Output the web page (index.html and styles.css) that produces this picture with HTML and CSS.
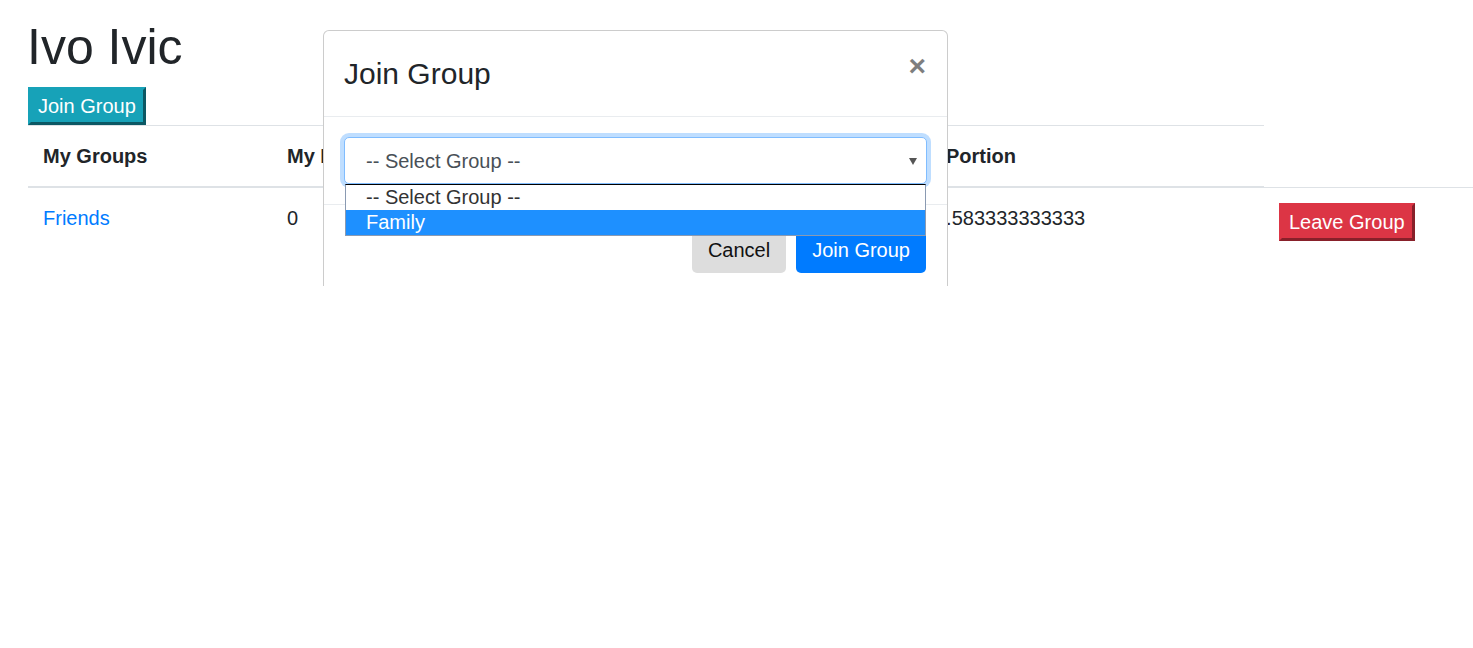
FILE: index.html
```html
<!DOCTYPE html>
<html lang="en">
<head>
<meta charset="utf-8">
<title>Ivo Ivic</title>
<link rel="stylesheet" href="styles.css">
</head>
<body>
<div class="page">
  <h1 class="name">Ivo Ivic</h1>
  <button class="raised raised-info">Join Group</button>
  <table class="groups">
    <colgroup>
      <col class="c1"><col class="c2"><col class="c3"><col class="c4"><col class="c5">
    </colgroup>
    <thead>
      <tr>
        <th>My Groups</th>
        <th>My Points</th>
        <th>Total Points</th>
        <th class="th-portion">Portion</th>
      </tr>
    </thead>
    <tbody>
      <tr>
        <td><a class="link" href="#">Friends</a></td>
        <td>0</td>
        <td>12</td>
        <td>0.583333333333</td>
        <td><button class="raised raised-danger">Leave Group</button></td>
      </tr>
    </tbody>
  </table>
</div>

<div class="modal">
  <div class="modal-dialog">
    <div class="modal-header">
      <h4 class="modal-title">Join Group</h4>
      <button class="close" type="button">&times;</button>
    </div>
    <div class="modal-body">
      <div class="select-wrap">
        <div class="select">
          <span>-- Select Group --</span>
          <span class="arrow"></span>
        </div>
        <div class="dropdown">
          <div class="option">-- Select Group --</div>
          <div class="option active">Family</div>
        </div>
      </div>
    </div>
    <div class="modal-footer">
      <button class="btn btn-light" type="button">Cancel</button>
      <button class="btn btn-primary" type="button">Join Group</button>
    </div>
  </div>
</div>
</body>
</html>
```

FILE: styles.css
```css
html, body {
  margin: 0;
  height: 100%;
  overflow: hidden;
  background: #fff;
}

body {
  position: relative;
  font-family: "Liberation Sans", Arial, sans-serif;
  font-size: 20px;
  line-height: 1.5;
  color: #212529;
}

.page {
  padding: 17px 0 0 28px;
}

.name {
  margin: 0 0 10px -1px;
  font-size: 50px;
  font-weight: 400;
  line-height: 1.2;
}

.raised {
  display: block;
  font-family: inherit;
  font-size: 20px;
  line-height: 30px;
  padding: 1px 7px;
  border: 3px outset;
  border-radius: 0;
  color: #fff;
  cursor: pointer;
}

.raised-info {
  background: #17a2b8;
  border-color: #17a2b8;
}

.raised-danger {
  background: #dc3545;
  border-color: #dc3545;
}

.groups {
  border-collapse: collapse;
  table-layout: fixed;
  width: 1536px;
}

.c1 { width: 244px; }
.c2 { width: 300px; }
.c3 { width: 348px; }
.c4 { width: 344px; }
.c5 { width: 300px; }

.groups th {
  text-align: left;
  font-weight: 700;
  padding: 15px;
  vertical-align: bottom;
  border-top: 1px solid #dee2e6;
  border-bottom: 2px solid #dee2e6;
  white-space: nowrap;
}

.groups th.th-portion {
  padding-left: 26px;
}

.groups td {
  padding: 15px;
  vertical-align: top;
  border-top: 1px solid #dee2e6;
  white-space: nowrap;
}

.link {
  color: #007bff;
  text-decoration: none;
}

/* modal */
.modal {
  position: absolute;
  top: 0;
  left: 0;
  right: 0;
  height: 286px;
  overflow: hidden;
}

.modal-dialog {
  box-sizing: border-box;
  width: 625px;
  margin: 30px 0 0 323px;
  background: #fff;
  border: 1px solid rgba(0, 0, 0, 0.2);
  border-radius: 6px;
}

.modal-header {
  display: flex;
  align-items: flex-start;
  justify-content: space-between;
  padding: 20px;
  border-bottom: 1px solid #e9ecef;
}

.modal-title {
  margin: 0;
  font-size: 30px;
  font-weight: 400;
  line-height: 1.5;
}

.close {
  padding: 20px;
  margin: -20px -19px -20px auto;
  background: transparent;
  border: 0;
  font-family: inherit;
  font-size: 30px;
  font-weight: 700;
  line-height: 1;
  color: #000;
  opacity: 0.5;
  text-shadow: 0 1px 0 #fff;
}

.modal-body {
  padding: 20px;
}

.select-wrap {
  position: relative;
}

.select {
  box-sizing: border-box;
  height: 47px;
  display: flex;
  align-items: center;
  justify-content: space-between;
  padding: 0 9px 0 21px;
  border: 1px solid #80bdff;
  border-radius: 5px;
  box-shadow: 0 0 0 4px rgba(0, 123, 255, 0.25);
  color: #495057;
  background: #fff;
}

.arrow {
  width: 0;
  height: 0;
  border-left: 4px solid transparent;
  border-right: 4px solid transparent;
  border-top: 7px solid #555;
  margin-top: 2px;
}

.dropdown {
  position: absolute;
  top: 47px;
  left: 1px;
  width: 581px;
  box-sizing: border-box;
  background: #fff;
  border: 1px solid #8a9ab2;
  border-top-color: #000;
}

.option {
  line-height: 25px;
  padding-left: 20px;
  color: #333;
}

.option.active {
  background: #1e90ff;
  color: #fff;
}

.modal-footer {
  display: flex;
  align-items: center;
  justify-content: flex-end;
  padding: 16px 16px 15px;
  border-top: 1px solid #e9ecef;
}

.btn {
  margin: 5px;
  font-family: inherit;
  font-size: 20px;
  line-height: 1.5;
  padding: 7.5px 15px;
  border: 1px solid transparent;
  border-radius: 5px;
  cursor: pointer;
}

.btn-light {
  background: #dddddd;
  color: #111;
}

.btn-primary {
  background: #007bff;
  color: #fff;
}
```
